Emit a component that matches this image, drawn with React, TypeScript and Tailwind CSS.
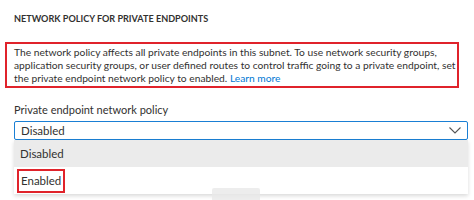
import React from "react";

export default function App() {
  return (
    <div className="relative w-[474px] h-[200px] overflow-hidden bg-white text-[#323130]" style={{ fontFamily: 'Lato, "Noto Sans", sans-serif' }}>
      <div className="pt-[12px] pl-[14px] text-[9.1px] font-bold leading-[14px] whitespace-nowrap">NETWORK POLICY FOR PRIVATE ENDPOINTS</div>
      <div className="mt-[16px] ml-[5px] w-[454px] border-2 border-[#e0232b] pl-[7px] pt-[2px] pb-[1px] text-[10.25px] leading-[13px] whitespace-nowrap">
        <div>The network policy affects all private endpoints in this subnet. To use network security groups,</div>
        <div>application security groups, or user defined routes to control traffic going to a private endpoint, set</div>
        <div>the private endpoint network policy to enabled. <span className="text-[#0078d4]">Learn more</span></div>
      </div>
      <div className="mt-[15px] ml-[14px] text-[11px] leading-[14px] whitespace-nowrap">Private endpoint network policy</div>
      <div className="relative ml-[14px] mt-[4px] w-[454px]">
        <div className="flex h-[19px] items-center justify-between rounded-[2px] border-[1.5px] border-[#1a7fd4] pl-[6px] pr-[6px] text-[11.5px]">
          <span>Disabled</span>
          <svg width="12" height="7" viewBox="0 0 12 7" fill="none" stroke="#555" strokeWidth="1.1"><path d="M0.5 0.5 L6 6 L11.5 0.5" /></svg>
        </div>
        <div className="shadow-[0_2px_4px_rgba(0,0,0,0.15)] bg-white">
          <div className="flex h-[27px] items-center bg-[#ebebeb] pl-[6px] text-[11.5px]">Disabled</div>
          <div className="flex h-[27px] items-center pl-[3px] text-[11.5px]">
            <span className="border-2 border-[#e0232b] px-[2px] py-[2px] leading-[16px]">Enabled</span>
          </div>
        </div>
      </div>
      <div className="absolute left-[212px] top-[188px] h-[14px] w-[48px] rounded-[2px] bg-[#e8e8e8] opacity-80" />
    </div>
  );
}
